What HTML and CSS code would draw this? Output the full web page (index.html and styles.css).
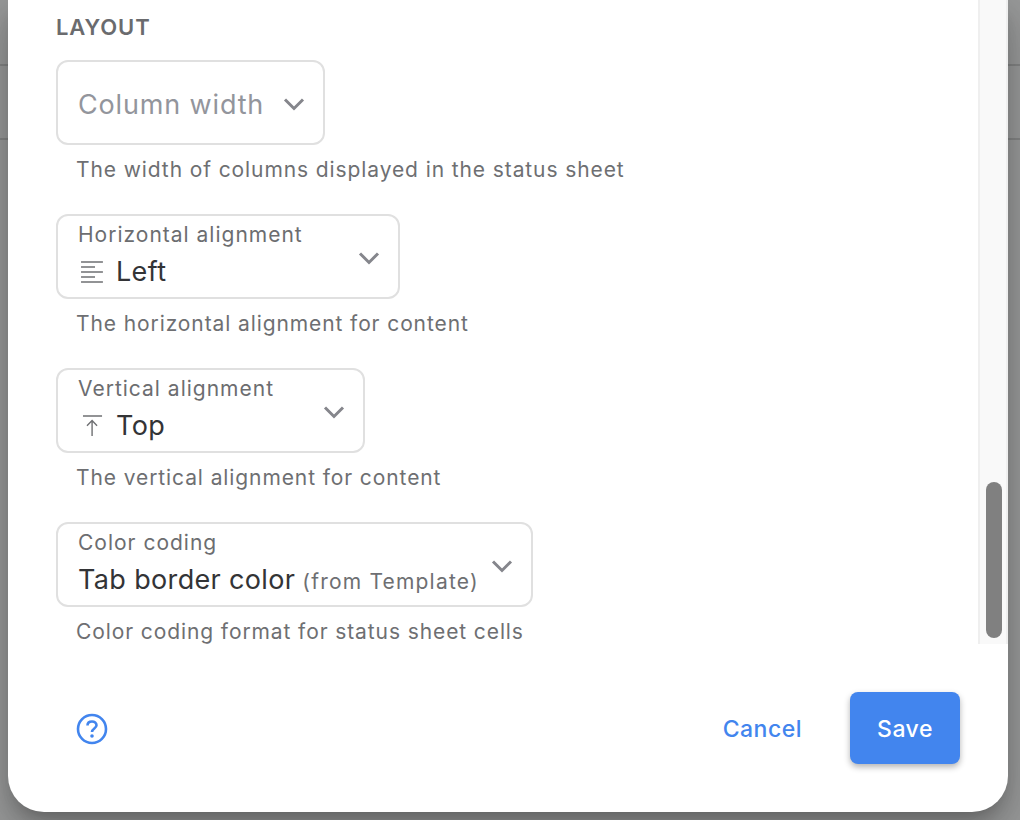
FILE: index.html
```html
<!DOCTYPE html>
<html lang="en">
<head>
    <meta charset="UTF-8">
    <title>Status sheet settings</title>
    <link rel="stylesheet" href="styles.css">
</head>
<body>

    <div class="backdrop">
        <div class="backdrop-row backdrop-row-first"></div>
        <div class="backdrop-row"></div>
    </div>

    <div class="dialog">
        <div class="dialog-body">
            <div class="form">
                <h2 class="section-title">LAYOUT</h2>

                <div class="field">
                    <div class="select select-empty select-column">
                        <span class="placeholder">Column width</span>
                        <svg class="chevron" viewBox="0 0 24 24"><path d="M3 6.5 12 15.5 21 6.5"/></svg>
                    </div>
                    <p class="hint">The width of columns displayed in the status sheet</p>
                </div>

                <div class="field">
                    <div class="select select-horizontal">
                        <div class="select-text">
                            <span class="select-label">Horizontal alignment</span>
                            <span class="select-value">
                                <svg class="value-icon" viewBox="0 0 24 24"><path d="M2.8 2.8H23M2.8 7.4H15.7M2.8 12H23M2.8 16.6H15.7M2.8 21.2H23"/></svg>
                                Left
                            </span>
                        </div>
                        <svg class="chevron" viewBox="0 0 24 24"><path d="M3 6.5 12 15.5 21 6.5"/></svg>
                    </div>
                    <p class="hint">The horizontal alignment for content</p>
                </div>

                <div class="field">
                    <div class="select select-vertical">
                        <div class="select-text">
                            <span class="select-label">Vertical alignment</span>
                            <span class="select-value">
                                <svg class="value-icon" viewBox="0 0 24 24"><path d="M4.6 2.8H22.2M13 21.2V7M8.3 11.7 13 7 17.6 11.7"/></svg>
                                Top
                            </span>
                        </div>
                        <svg class="chevron" viewBox="0 0 24 24"><path d="M3 6.5 12 15.5 21 6.5"/></svg>
                    </div>
                    <p class="hint">The vertical alignment for content</p>
                </div>

                <div class="field">
                    <div class="select select-color">
                        <div class="select-text">
                            <span class="select-label">Color coding</span>
                            <span class="select-value select-value-text">Tab border color <small class="from">(from Template)</small></span>
                        </div>
                        <svg class="chevron" viewBox="0 0 24 24"><path d="M3 6.5 12 15.5 21 6.5"/></svg>
                    </div>
                    <p class="hint">Color coding format for status sheet cells</p>
                </div>
            </div>

            <div class="scrollbar">
                <div class="scrollbar-thumb"></div>
            </div>
        </div>

        <div class="dialog-footer">
            <svg class="help" viewBox="0 0 32 32">
                <circle cx="16" cy="16" r="14"/>
                <path d="M11.5 12.5C11.5 9.8 13.5 8.5 16 8.5C18.5 8.5 20.5 10 20.5 12.3C20.5 15.5 16 15.5 16 19"/>
                <circle class="help-dot" cx="16" cy="23" r="1.8"/>
            </svg>
            <div class="actions">
                <button class="btn-cancel">Cancel</button>
                <button class="btn-save">Save</button>
            </div>
        </div>
    </div>

</body>
</html>
```

FILE: styles.css
```css
* {
    box-sizing: border-box;
}

html, body {
    height: 100%;
}

body {
    margin: 0;
    overflow: hidden;
    font-family: Inter, "Liberation Sans", sans-serif;
    background-color: #9a9b9b;
}

.backdrop {
    height: 820px;
}

.backdrop-row {
    height: 74px;
    border-bottom: 2px solid rgba(0, 0, 0, 0.14);
}

.backdrop-row-first {
    height: 66px;
}

.dialog {
    position: absolute;
    top: 0;
    left: 8px;
    width: 1000px;
    height: 812px;
    display: flex;
    flex-direction: column;
    background-color: white;
    border-radius: 0 0 36px 36px;
    box-shadow: 0 11px 15px -7px rgba(0, 0, 0, 0.2), 0 24px 38px 3px rgba(0, 0, 0, 0.14), 0 9px 46px 8px rgba(0, 0, 0, 0.12);
}

.dialog-body {
    display: flex;
    height: 644px;
}

.form {
    flex: 1;
    padding: 13px 0 0 48px;
}

.section-title {
    margin: 0 0 19px;
    font-size: 22px;
    line-height: 28px;
    font-weight: 600;
    letter-spacing: 0.9px;
    color: #6a6b6e;
}

.field {
    margin-bottom: 30px;
}

.select {
    display: flex;
    justify-content: space-between;
    height: 85px;
    padding: 0 17px 0 20px;
    border: 2px solid #e0e0e0;
    border-radius: 12px;
}

.select-column {
    width: 269px;
}

.select-horizontal {
    width: 344px;
}

.select-vertical {
    width: 309px;
}

.select-color {
    width: 477px;
}

.select-empty {
    align-items: center;
}

.placeholder {
    margin-top: 4px;
    font-size: 27px;
    letter-spacing: 0.85px;
    color: #93959c;
}

.select-text {
    display: flex;
    flex-direction: column;
}

.select-label {
    margin-top: 6px;
    font-size: 21px;
    line-height: 26px;
    letter-spacing: 1px;
    color: #6c6d70;
}

.select-value {
    display: flex;
    align-items: center;
    gap: 12px;
    margin-top: 6px;
    font-size: 27px;
    line-height: 36px;
    letter-spacing: 0.35px;
    color: #333436;
}

.select-value-text {
    align-items: baseline;
}

.from {
    margin-left: -5px;
    font-size: 21px;
    letter-spacing: 1.2px;
    color: #6e6f72;
}

.value-icon {
    width: 26px;
    height: 26px;
    fill: none;
    stroke: #6f7073;
    stroke-width: 1.3;
}

.chevron {
    flex: none;
    width: 24px;
    height: 24px;
    margin-top: 31px;
    fill: none;
    stroke: #85868c;
    stroke-width: 3;
}

.select-empty .chevron {
    margin-top: 4px;
}

.hint {
    margin: 11px 0 0 20px;
    font-size: 21px;
    line-height: 28px;
    letter-spacing: 0.9px;
    color: #6e6f72;
}

.scrollbar {
    flex: none;
    width: 30px;
    padding: 482px 4px 6px 6px;
    background-color: #f9f9f9;
    border-left: 2px solid #efefef;
    border-right: 2px solid #efefef;
}

.scrollbar-thumb {
    height: 156px;
    background-color: #808080;
    border-radius: 8px;
}

.dialog-footer {
    display: flex;
    justify-content: space-between;
    align-items: center;
    padding: 48px 48px 0 68px;
}

.help {
    width: 32px;
    height: 32px;
    margin-top: 2px;
    fill: none;
    stroke: #4285ee;
    stroke-width: 2.6;
}

.help-dot {
    fill: #4285ee;
    stroke: none;
}

.actions {
    display: flex;
    align-items: center;
    gap: 48px;
}

button {
    border: none;
    font-family: inherit;
    font-size: 23px;
    font-weight: 500;
    letter-spacing: 0.5px;
    cursor: pointer;
}

.btn-cancel {
    padding: 2px 0 0;
    background: none;
    color: #4285ee;
}

.btn-save {
    width: 110px;
    height: 72px;
    padding-top: 2px;
    background-color: #4285ee;
    color: white;
    border-radius: 8px;
    box-shadow: 0 3px 6px rgba(0, 0, 0, 0.3);
}
```
